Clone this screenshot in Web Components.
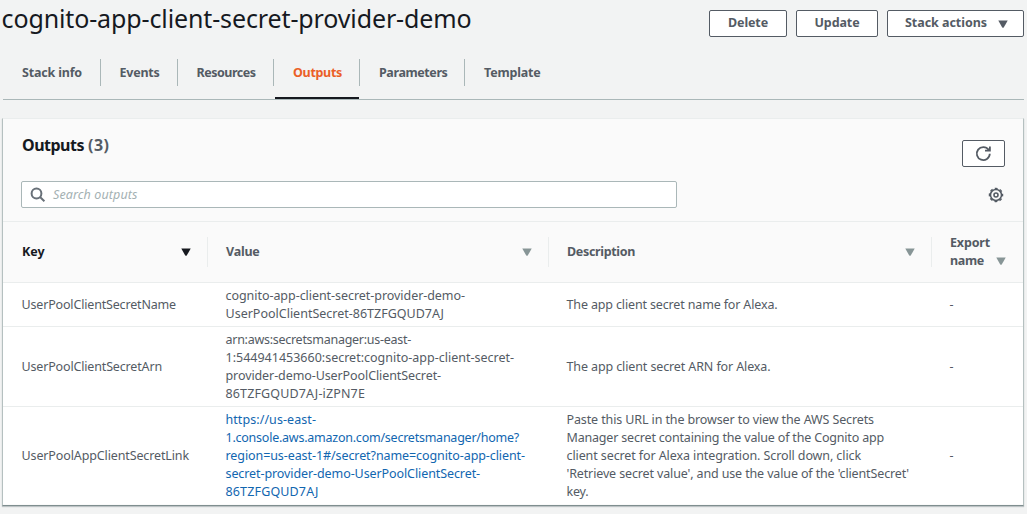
<!DOCTYPE html>
<html lang="en">
<head>
<meta charset="utf-8">
<title>Stack outputs</title>
<style>
html,body{margin:0;height:100%;overflow:hidden}
body{background:#f2f3f3;color:#545b64;font:12.5px/18px "Noto Sans","Open Sans",sans-serif}
</style>
</head>
<body>
<stack-page></stack-page>
<script>
const define = (name, html, extra) => customElements.define(name, class extends HTMLElement {
  connectedCallback() {
    if (this.shadowRoot) return;
    this.attachShadow({mode: 'open'}).innerHTML = html;
    if (extra) extra.call(this);
  }
});

// One line of text whose tracking is adjusted so that it spans the width in "w".
define('fit-line', `<style>:host{display:block;white-space:pre;width:max-content}span{display:inline-block}</style><span><slot></slot></span>`, function () {
  const s = this.shadowRoot.querySelector('span');
  const w = +this.getAttribute('w');
  const n = this.textContent.length;
  if (w && n > 1) s.style.letterSpacing = ((w - s.getBoundingClientRect().width) / n).toFixed(4) + 'px';
});

define('caret-icon', `<style>:host{display:block;width:10px;height:8px;flex:none}svg{display:block}</style>
<svg width="10" height="8" viewBox="0 0 10 8"><path d="M.3.4h9.4L5.9 7.2Q5 8.4 4.1 7.2Z" fill="currentColor"/></svg>`);

define('stack-button', `<style>
:host{display:block}
button{display:flex;align-items:center;justify-content:center;gap:11px;box-sizing:border-box;width:100%;height:27px;padding:0 0 2px;border:1px solid #545b64;border-radius:2px;background:#fff;color:#545b64;font:bold 12.5px/18px "Noto Sans",sans-serif}
::slotted(caret-icon){position:relative;top:1px}
</style><button><slot></slot></button>`);

define('stack-tab', `<style>
:host{display:block;box-sizing:border-box;height:41px;padding-left:var(--pad,20px);font-weight:bold;position:relative}
.label{box-sizing:border-box;height:27px;padding-top:5px;border-right:1px solid #aab7b8}
:host([last]) .label{border:0}
:host([active]){color:#eb5f27}
:host([active])::after{content:"";position:absolute;left:1px;right:1px;bottom:1px;height:2px;background:#16191f}
</style><div class="label"><slot></slot></div>`);

define('stack-header', `<style>
:host{display:block;height:100px}
.top{display:flex;height:59px;justify-content:space-between}
h1{margin:1px 0 0 1.5px;font:400 25px/35px "Noto Sans",sans-serif;color:#16191f}
.buttons{display:flex;gap:9px;padding:10px 3px 0 0;align-items:flex-start}
nav{display:flex;margin:0 3px;border-bottom:1px solid #aab7b8;height:40px}
</style>
<div class="top"><h1><fit-line w="470">cognito-app-client-secret-provider-demo</fit-line></h1>
<div class="buttons">
<stack-button style="width:78px"><fit-line w="40">Delete</fit-line></stack-button>
<stack-button style="width:82px"><fit-line w="45">Update</fit-line></stack-button>
<stack-button style="width:137px"><fit-line w="82" style="margin-left:2px">Stack actions</fit-line><caret-icon></caret-icon></stack-button>
</div></div>
<nav>
<stack-tab style="width:98px;--pad:19px"><fit-line w="60">Stack info</fit-line></stack-tab>
<stack-tab style="width:77px;--pad:18.5px"><fit-line w="40">Events</fit-line></stack-tab>
<stack-tab style="width:96px;--pad:18.5px"><fit-line w="59">Resources</fit-line></stack-tab>
<stack-tab active style="width:86px;--pad:19px"><fit-line w="49">Outputs</fit-line></stack-tab>
<stack-tab style="width:105px;--pad:19px"><fit-line w="68.5">Parameters</fit-line></stack-tab>
<stack-tab last style="--pad:19px"><fit-line w="56.5">Template</fit-line></stack-tab>
</nav>`);

define('search-box', `<style>
:host{display:flex;box-sizing:border-box;width:656px;height:27px;border:1px solid #aab7b8;border-radius:2px;background:#fff;padding:4px 0 0 8px;gap:7px;color:#a4b1b3;font-style:italic}
svg{display:block;margin-top:1px}
</style><svg width="16" height="16" viewBox="0 0 16 16" fill="none" stroke="#687078" stroke-width="2"><circle cx="6.5" cy="6.5" r="4.9"/><path d="M10 10l4.4 4.2"/></svg><slot></slot>`);

define('output-row', `<style>
:host{display:grid;grid-template-columns:205px 341px 383px 90px;box-sizing:border-box;background:#fff;border-bottom:1px solid #eaeded;padding:4px 0 3px;align-items:center}
:host([last]){border:0}
div{padding-left:17.5px}
.k{padding-left:18.5px}
.v ::slotted(a){color:#1166b0;text-decoration:none;display:block}
</style><div class="k"><slot name="key"></slot></div><div class="v"><slot name="value"></slot></div><div><slot name="description"></slot></div><div><slot name="export"></slot></div>`);

define('column-head', `<style>
:host{display:flex;box-sizing:border-box;height:30px;align-items:center;justify-content:space-between;border-right:1px solid #eaeded;padding:0 16px 0 18px;font-weight:bold;--c:#879596}
:host([first]){padding-left:19px;color:#16191f;--c:#16191f}
:host([last]){border:0;height:38px;align-items:flex-end;padding-bottom:1px}
caret-icon{color:var(--c);margin-bottom:1px}
:host([last]) caret-icon{margin-bottom:5px}
</style><div><slot></slot></div><caret-icon></caret-icon>`);

define('outputs-panel', `<style>
:host{display:block;box-sizing:border-box;margin:18px 3px 0 2px;height:388px;background:#fafafa;border:1px solid #b5c0c0;border-top-color:#eaeded;border-bottom-color:#7f8e8f;box-shadow:0 1px 1px rgba(0,28,36,.22)}
.head{display:flex;justify-content:space-between;box-sizing:border-box;height:62px;padding:15px 18px 0 19px}
h2{margin:0;display:flex;gap:4px;font:bold 16px/22px "Noto Sans",sans-serif;color:#16191f}
h2 .n{color:#545b64}
.refresh{width:43px;padding-top:6px}
.tools{display:flex;justify-content:space-between;box-sizing:border-box;height:41px;padding:0 19px 0 18px;border-bottom:1px solid #eaeded}
.tools svg{display:block;margin-top:6px}
.refresh svg{display:block;margin-top:2px}
.cols{display:grid;grid-template-columns:205px 341px 383px 90px;height:61px;box-sizing:border-box;border-bottom:1px solid #eaeded;align-items:center}
</style>
<div class="head"><h2><fit-line w="62">Outputs</fit-line><fit-line class="n" w="21.5">(3)</fit-line></h2>
<stack-button class="refresh"><svg width="17" height="17" viewBox="0 0 17 17" fill="none" stroke="#545b64" stroke-width="1.8"><path d="M13.6 4.8A6.5 6.5 0 1 0 14.8 8.8"/><path d="M14.9 1.4V5.6H10"/><path d="M14.9 5.6V2.6L11.8 5.6Z" fill="#545b64" stroke="none"/></svg></stack-button></div>
<div class="tools"><search-box><fit-line w="84.5">Search outputs</fit-line></search-box>
<svg width="16" height="16" viewBox="0 0 16 16" fill="none" stroke="#545b64"><circle cx="8" cy="8" r="5.5" stroke-width="1.5"/><circle cx="8" cy="8" r="6.6" stroke-width="1.3" stroke-dasharray="2.9 2.284" stroke-dashoffset="1.45"/><circle cx="8" cy="8" r="2" stroke-width="1.6"/></svg></div>
<div class="cols">
<column-head first><fit-line w="22.5">Key</fit-line></column-head>
<column-head><fit-line w="33.5">Value</fit-line></column-head>
<column-head><fit-line w="68">Description</fit-line></column-head>
<column-head last><fit-line w="40">Export</fit-line><fit-line w="34">name</fit-line></column-head>
</div>
<output-row><fit-line slot="key" w="154.5">UserPoolClientSecretName</fit-line>
<fit-line slot="value" w="239.5">cognito-app-client-secret-provider-demo-</fit-line><fit-line slot="value" w="218.5">UserPoolClientSecret-86TZFGQUD7AJ</fit-line>
<fit-line slot="description" w="211">The app client secret name for Alexa.</fit-line><fit-line slot="export" w="6">-</fit-line></output-row>
<output-row><fit-line slot="key" w="140.5">UserPoolClientSecretArn</fit-line>
<fit-line slot="value" w="185.5">arn:aws:secretsmanager:us-east-</fit-line><fit-line slot="value" w="288.5">1:544941453660:secret:cognito-app-client-secret-</fit-line><fit-line slot="value" w="215.5">provider-demo-UserPoolClientSecret-</fit-line><fit-line slot="value" w="139.5">86TZFGQUD7AJ-iZPN7E</fit-line>
<fit-line slot="description" w="204">The app client secret ARN for Alexa.</fit-line><fit-line slot="export" w="6">-</fit-line></output-row>
<output-row last><fit-line slot="key" w="167.5">UserPoolAppClientSecretLink</fit-line>
<a slot="value"><fit-line w="90.5">https://us-east-</fit-line><fit-line w="293.5">1.console.aws.amazon.com/secretsmanager/home?</fit-line><fit-line w="299.5">region=us-east-1#/secret?name=cognito-app-client-</fit-line><fit-line w="254.5">secret-provider-demo-UserPoolClientSecret-</fit-line><fit-line w="93">86TZFGQUD7AJ</fit-line></a>
<fit-line slot="description" w="307.5">Paste this URL in the browser to view the AWS Secrets</fit-line><fit-line slot="description" w="317.5">Manager secret containing the value of the Cognito app</fit-line><fit-line slot="description" w="294.5">client secret for Alexa integration. Scroll down, click</fit-line><fit-line slot="description" w="342.5">'Retrieve secret value', and use the value of the 'clientSecret'</fit-line><fit-line slot="description" w="22">key.</fit-line><fit-line slot="export" w="6">-</fit-line></output-row>`);

define('stack-page', `<style>:host{display:block;width:1027px;height:514px;overflow:hidden}</style><stack-header></stack-header><outputs-panel></outputs-panel>`);
</script>
</body>
</html>
